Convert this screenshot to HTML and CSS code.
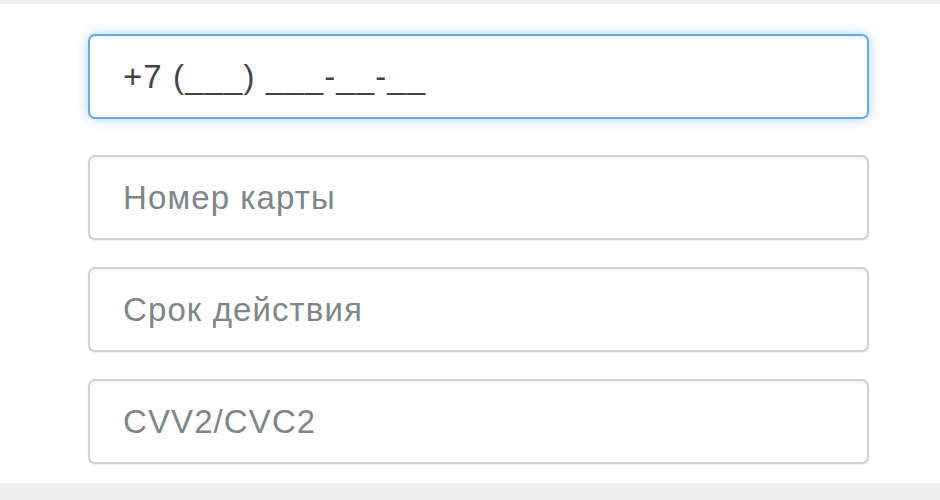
FILE: index.html
```html
<!DOCTYPE html>
<html lang="ru">
<head>
    <meta charset="UTF-8">
    <meta name="viewport" content="width=device-width, initial-scale=1.0">
    <title>Оплата картой</title>
    <link rel="stylesheet" href="styles.css">
</head>
<body>
    <div class="card">
        <form class="pay-form">
            <input type="text" class="form-control focused" value="+7 (___) ___-__-__">
            <input type="text" class="form-control" placeholder="Номер карты">
            <input type="text" class="form-control" placeholder="Срок действия">
            <input type="text" class="form-control" placeholder="CVV2/CVC2">
        </form>
    </div>
</body>
</html>
```

FILE: styles.css
```css
body {
    margin: 0;
    padding: 4px 0 18px;
    background-color: #efefef;
    font-family: "Liberation Sans", Arial, sans-serif;
}
.card {
    background: #fff;
    padding: 30px 71px 19px 88px;
}
.pay-form {
    display: flex;
    flex-direction: column;
    gap: 27px;
}
.form-control {
    box-sizing: border-box;
    width: 100%;
    height: 85px;
    margin: 0;
    padding: 0 33px;
    font-family: inherit;
    font-size: 33px;
    letter-spacing: 1.1px;
    color: #444;
    background: #fff;
    border: 2px solid #d2d2d2;
    border-radius: 7px;
    box-shadow: inset 0 2px 2px rgba(0,0,0,0.05), 0 1px 2px rgba(0,0,0,0.08);
    outline: none;
}
.form-control::placeholder {
    color: #80858a;
    opacity: 1;
}
.form-control.focused {
    margin-bottom: 9px;
    border-color: #6aa8e2;
    box-shadow: inset 0 2px 2px rgba(0,0,0,0.05), 0 0 12px rgba(102,175,233,0.55);
}
```
